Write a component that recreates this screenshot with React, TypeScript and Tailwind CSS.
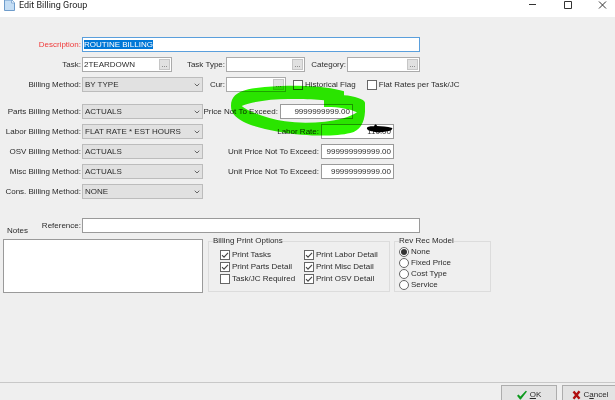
import { useEffect, useRef } from 'react';
import { ChevronDown } from 'lucide-react';

const labelClass = 'shrink-0 whitespace-nowrap text-right';
const boxClass = 'h-[15px] min-w-0 border border-[#9a9a9a] bg-white px-0.5 outline-none';

interface PickerProps {
  id: string;
  label: string;
  labelWidth: string;
  width: string;
  value?: string;
}

const Picker: React.FC<PickerProps> = ({ id, label, labelWidth, width, value = '' }) => {
  return (
    <>
      <label htmlFor={id} className={`${labelClass} ${labelWidth} mr-px`}>
        {label}
      </label>
      <div className={`flex h-[15px] shrink-0 border border-[#ababab] bg-white p-px ${width}`}>
        <input id={id} defaultValue={value} className="w-0 flex-1 outline-none" />
        <button
          type="button"
          aria-label={`Browse ${label}`}
          className="w-[11px] border border-[#c6c6c6] bg-[#e1e1e1] leading-[8px] text-[#555]"
        >
          ...
        </button>
      </div>
    </>
  );
};

interface MethodSelectProps {
  id: string;
  label: string;
  value: string;
}

const MethodSelect: React.FC<MethodSelectProps> = ({ id, label, value }) => {
  return (
    <>
      <label htmlFor={id} className={`${labelClass} mr-px w-[81px]`}>
        {label}
      </label>
      <div className="relative w-[121px] shrink-0">
        <select
          id={id}
          defaultValue={value}
          className="block h-[15px] w-full appearance-none border border-[#bcbcbc] bg-[#e1e1e1] pr-3 pl-0.5 outline-none"
        >
          <option>{value}</option>
        </select>
        <ChevronDown
          className="pointer-events-none absolute top-1 right-0.5 size-2 text-[#666]"
          strokeWidth={3}
        />
      </div>
    </>
  );
};

interface AmountProps {
  id: string;
  label: string;
  labelWidth: string;
  value: string;
}

const Amount: React.FC<AmountProps> = ({ id, label, labelWidth, value }) => {
  return (
    <>
      <label htmlFor={id} className={`${labelClass} ${labelWidth} mr-0.5`}>
        {label}
      </label>
      <input id={id} defaultValue={value} className={`${boxClass} w-[73px] shrink-0 text-right`} />
    </>
  );
};

interface TickProps {
  label: string;
  checked?: boolean;
}

const Tick: React.FC<TickProps> = ({ label, checked }) => {
  return (
    <label className="flex items-center gap-0.5 whitespace-nowrap">
      <span className="grid size-2.5 shrink-0">
        <input
          type="checkbox"
          defaultChecked={checked}
          className="peer col-start-1 row-start-1 size-2.5 appearance-none border border-[#666] bg-white"
        />
        <svg
          viewBox="0 0 10 10"
          className="pointer-events-none invisible col-start-1 row-start-1 size-2.5 peer-checked:visible"
        >
          <path d="M2 5.2 4 7.2 8 2.8" fill="none" stroke="#444" strokeWidth="1.1" />
        </svg>
      </span>
      {label}
    </label>
  );
};

const Radio: React.FC<TickProps> = ({ label, checked }) => {
  return (
    <label className="flex h-[11px] items-center gap-0.5 whitespace-nowrap">
      <span className="grid size-2.5 shrink-0 place-items-center">
        <input
          type="radio"
          name="revRec"
          defaultChecked={checked}
          className="peer col-start-1 row-start-1 size-2.5 appearance-none rounded-full border border-[#666] bg-white"
        />
        <span className="pointer-events-none invisible col-start-1 row-start-1 size-1.5 rounded-full bg-[#333] peer-checked:visible" />
      </span>
      {label}
    </label>
  );
};

const Marker = () => {
  return (
    <svg
      viewBox="0 0 690 360"
      className="pointer-events-none absolute top-[53px] left-[195px] h-[120px] w-[230px] mix-blend-multiply"
      aria-hidden="true"
    >
      <path
        fill="#2cf400"
        fillRule="evenodd"
        d="M108 108C108 82 124 66 160 58C205 49 260 47 310 47C365 48 420 54 447 64V76C478 78 508 88 510 98V125C508 158 495 182 466 189C430 198 370 198 320 194C260 189 180 174 145 155C120 142 108 128 108 108ZM140 108C175 94 230 87 280 87C320 86 360 88 387 91V111C425 110 465 116 486 127C465 142 430 150 390 155C350 159 305 159 270 154C225 147 165 128 140 108Z"
      />
      <path
        fill="#000"
        d="M516 173C522 167 532 170 538 168C538 162 545 162 546 168C560 170 575 168 592 174C592 180 585 184 574 184C560 189 540 188 532 184C522 182 514 178 516 173Z"
      />
    </svg>
  );
};

const App = () => {
  const description = useRef<HTMLInputElement>(null);

  useEffect(() => {
    description.current?.focus();
    description.current?.select();
  }, []);

  return (
    <div className="flex h-screen flex-col overflow-hidden bg-[#efefef] font-['Liberation_Sans',Arial,sans-serif] text-[8px] leading-[10px] text-[#2b2b2b]">
      <header className="flex h-[17px] shrink-0 items-start bg-white pr-2 pl-1">
        <svg viewBox="0 0 11 12" className="mr-1 h-3 w-[11px]" aria-hidden="true">
          <path d="M.5 0H8L10.5 3V10.5H.5Z" fill="#c5def5" stroke="#6e9ccb" />
          <path d="M7.5 0V3H10.5" fill="#f2f8fd" stroke="#6e9ccb" strokeWidth=".7" />
        </svg>
        <h1 className="font-[Roboto,sans-serif] text-[9px] leading-[11px] text-[#222]">
          Edit Billing Group
        </h1>
        <div className="ml-auto flex gap-[26px] text-[#333]">
          <button type="button" aria-label="Minimize">
            <svg viewBox="0 0 9 10" className="h-2.5 w-[9px]">
              <path d="M1 4.5H8" stroke="currentColor" />
            </svg>
          </button>
          <button type="button" aria-label="Maximize">
            <svg viewBox="0 0 9 10" className="h-2.5 w-[9px]">
              <path d="M1.5 1.5H8.5V8.5H1.5Z" fill="none" stroke="currentColor" />
            </svg>
          </button>
          <button type="button" aria-label="Close">
            <svg viewBox="0 0 9 10" className="h-2.5 w-[9px]">
              <path d="M1 1.5 8 8.5M8 1.5 1 8.5" stroke="currentColor" />
            </svg>
          </button>
        </div>
      </header>

      <main className="relative flex-1 overflow-hidden pt-5">
        <div className="flex flex-col gap-[5px]">
          <div className="flex items-center">
            <label htmlFor="description" className={`${labelClass} mr-px w-[81px] text-[#f03a3a]`}>
              Description:
            </label>
            <input
              id="description"
              ref={description}
              defaultValue="ROUTINE BILLING"
              className="h-[15px] w-[338px] border border-[#5a9fdc] bg-white px-px outline-none selection:bg-[#0078d7] selection:text-white"
            />
          </div>
          <div className="flex items-center">
            <Picker id="task" label="Task:" labelWidth="w-[81px]" width="w-[90px]" value="2TEARDOWN" />
            <Picker id="taskType" label="Task Type:" labelWidth="w-[53px]" width="w-[79px]" />
            <Picker id="category" label="Category:" labelWidth="w-[41px]" width="w-[73px]" />
          </div>
          <div className="flex items-center">
            <MethodSelect id="billing" label="Billing Method:" value="BY TYPE" />
            <Picker id="currency" label="Cur:" labelWidth="w-[22px]" width="w-[60px]" />
            <div className="ml-[7px] flex gap-[11px]">
              <Tick label="Historical Flag" />
              <Tick label="Flat Rates per Task/JC" />
            </div>
          </div>
        </div>

        <div className="mt-3 flex flex-col gap-[5px]">
          <div className="flex items-center">
            <MethodSelect id="parts" label="Parts Billing Method:" value="ACTUALS" />
            <Amount
              id="partsPrice"
              label="Price Not To Exceed:"
              labelWidth="w-[75px]"
              value="9999999999.00"
            />
          </div>
          <div className="flex items-center">
            <MethodSelect id="labor" label="Labor Billing Method:" value="FLAT RATE * EST HOURS" />
            <Amount id="laborRate" label="Labor Rate:" labelWidth="w-[116px]" value="110.00" />
          </div>
          <div className="flex items-center">
            <MethodSelect id="osv" label="OSV Billing Method:" value="ACTUALS" />
            <Amount
              id="osvPrice"
              label="Unit Price Not To Exceed:"
              labelWidth="w-[116px]"
              value="999999999999.00"
            />
          </div>
          <div className="flex items-center">
            <MethodSelect id="misc" label="Misc Billing Method:" value="ACTUALS" />
            <Amount
              id="miscPrice"
              label="Unit Price Not To Exceed:"
              labelWidth="w-[116px]"
              value="99999999999.00"
            />
          </div>
          <div className="flex items-center">
            <MethodSelect id="cons" label="Cons. Billing Method:" value="NONE" />
          </div>
        </div>

        <div className="mt-[19px] flex h-[18px] items-start">
          <label htmlFor="notes" className="w-[30px] self-end pl-[7px]">
            Notes
          </label>
          <label htmlFor="reference" className={`${labelClass} mt-[3px] mr-px w-[51px]`}>
            Reference:
          </label>
          <input id="reference" className={`${boxClass} w-[338px]`} />
        </div>

        <div className="mt-[3px] flex items-start pl-[3px]">
          <textarea
            id="notes"
            className="h-[54px] w-[200px] resize-none border border-[#9a9a9a] bg-white outline-none"
          />
          <fieldset className="-mt-[3px] ml-[5px] h-14 w-[182px] border border-[#dcdcdc]">
            <legend className="ml-1">Billing Print Options</legend>
            <div className="grid grid-cols-[84px_1fr] gap-y-0.5 pt-1 pl-[11px]">
              <Tick label="Print Tasks" checked />
              <Tick label="Print Labor Detail" checked />
              <Tick label="Print Parts Detail" checked />
              <Tick label="Print Misc Detail" checked />
              <Tick label="Task/JC Required" />
              <Tick label="Print OSV Detail" checked />
            </div>
          </fieldset>
          <fieldset className="-mt-[3px] ml-1 h-14 w-[97px] border border-[#dcdcdc]">
            <legend className="ml-1">Rev Rec Model</legend>
            <div className="flex flex-col items-start pl-1">
              <Radio label="None" checked />
              <Radio label="Fixed Price" />
              <Radio label="Cost Type" />
              <Radio label="Service" />
            </div>
          </fieldset>
        </div>

        <Marker />
      </main>

      <footer className="flex h-[18px] shrink-0 items-start justify-end gap-[5px] overflow-hidden border-t border-[#c8c8c8] pt-0.5">
        <button
          type="button"
          className="flex h-5 w-14 items-center justify-center gap-[3px] border border-[#adadad] bg-[#e3e3e3]"
        >
          <svg viewBox="0 0 10 10" className="size-2.5" aria-hidden="true">
            <path d="M0 5.8 1.6 4.6 3.4 6.6 8.8 .8 10 1.6 3.8 9.4 3 9.4Z" fill="#0d9a1e" />
          </svg>
          <span>
            <u>O</u>K
          </span>
        </button>
        <button
          type="button"
          className="-mr-[3px] flex h-5 w-14 items-center justify-center gap-[3px] border border-[#adadad] bg-[#e3e3e3]"
        >
          <svg viewBox="0 0 9 10" className="h-2.5 w-[9px]" aria-hidden="true">
            <path d="M1.5 1.5 7.5 8.8M7.5 1.2 1.5 8.8" fill="none" stroke="#b01010" strokeWidth="2.4" />
          </svg>
          <span>
            C<u>a</u>ncel
          </span>
        </button>
      </footer>
    </div>
  );
};

export default App;
